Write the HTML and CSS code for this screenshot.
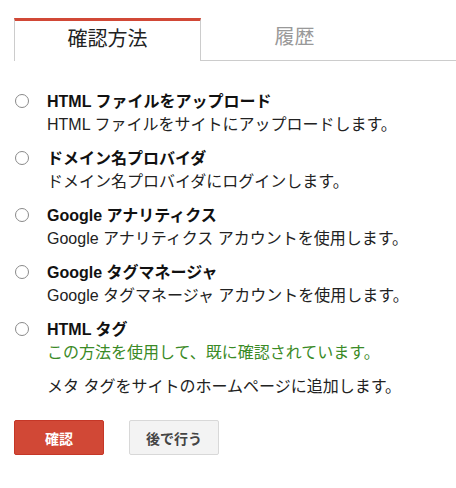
FILE: index.html
```html
<!DOCTYPE html>
<html lang="ja">
<head>
<meta charset="utf-8">
<link rel="stylesheet" href="styles.css">
</head>
<body>
<div class="page">
  <div class="tabs">
    <div class="tab active">確認方法</div>
    <div class="tab">履歴</div>
  </div>
  <ul class="methods">
    <li class="method">
      <span class="radio"></span>
      <div class="body">
        <div class="title">HTML ファイルをアップロード</div>
        <div class="desc">HTML ファイルをサイトにアップロードします。</div>
      </div>
    </li>
    <li class="method">
      <span class="radio"></span>
      <div class="body">
        <div class="title">ドメイン名プロバイダ</div>
        <div class="desc">ドメイン名プロバイダにログインします。</div>
      </div>
    </li>
    <li class="method">
      <span class="radio"></span>
      <div class="body">
        <div class="title">Google アナリティクス</div>
        <div class="desc">Google アナリティクス アカウントを使用します。</div>
      </div>
    </li>
    <li class="method">
      <span class="radio"></span>
      <div class="body">
        <div class="title">Google タグマネージャ</div>
        <div class="desc">Google タグマネージャ アカウントを使用します。</div>
      </div>
    </li>
    <li class="method">
      <span class="radio"></span>
      <div class="body">
        <div class="title">HTML タグ</div>
        <div class="verified">この方法を使用して、既に確認されています。</div>
        <div class="desc extra">メタ タグをサイトのホームページに追加します。</div>
      </div>
    </li>
  </ul>
  <div class="actions">
    <button class="btn primary">確認</button>
    <button class="btn secondary">後で行う</button>
  </div>
</div>
</body>
</html>
```

FILE: styles.css
```css
html, body {
  margin: 0;
  padding: 0;
  background: #fff;
}
body {
  font-family: "Liberation Sans", Arial, "Noto Sans CJK JP", sans-serif;
  color: #222;
}
.page {
  padding: 18px 0 0 14px;
}
.tabs {
  display: flex;
  align-items: flex-end;
  border-bottom: 1px solid #ccc;
  height: 42px;
}
.tab {
  width: 187px;
  height: 41px;
  box-sizing: border-box;
  text-align: center;
  font-size: 20px;
  line-height: 36px;
  color: #999;
}
.tab.active {
  border-top: 3px solid #d14836;
  border-left: 1px solid #ccc;
  border-right: 1px solid #ccc;
  background: #fff;
  color: #222;
  height: 43px;
  margin-bottom: -1px;
}
.methods {
  list-style: none;
  margin: 0;
  padding: 29px 0 0 0;
}
.method {
  display: flex;
  align-items: flex-start;
  margin-bottom: 11px;
}
.radio {
  width: 14px;
  height: 14px;
  box-sizing: border-box;
  border: 1px solid #8a8a8a;
  border-radius: 50%;
  margin: 4px 0 0 1px;
  flex: none;
}
.body {
  margin-left: 18px;
  font-size: 16px;
  line-height: 23px;
}
.title {
  font-weight: bold;
  color: #111;
}
.desc {
  color: #222;
}
.verified {
  color: #3a8a26;
}
.desc.extra {
  margin-top: 11px;
}
.actions {
  display: flex;
  gap: 25px;
  margin-top: 22px;
}
.btn {
  width: 90px;
  height: 35px;
  border-radius: 2px;
  font-family: "Liberation Sans", Arial, "Noto Sans CJK JP", sans-serif;
  font-size: 14px;
  font-weight: bold;
  padding: 0;
}
.btn.primary {
  background: #d14836;
  border: 1px solid #c53727;
  color: #fff;
}
.btn.secondary {
  background: #f3f3f3;
  border: 1px solid #d8d8d8;
  color: #444;
}
```
